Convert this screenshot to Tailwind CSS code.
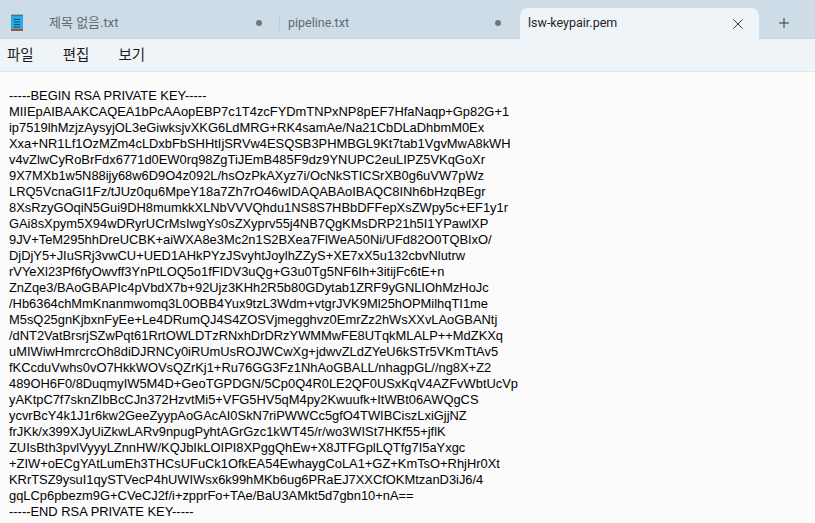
<!DOCTYPE html>
<html lang="ko">
<head>
    <meta charset="utf-8">
    <title>lsw-keypair.pem - Notepad</title>
    <script src="https://cdn.jsdelivr.net/npm/@tailwindcss/browser@4"></script>
</head>
<body class="h-[523px] w-[815px] overflow-hidden bg-[#fbfbfb] font-['Roboto','Noto_Sans_CJK_KR',sans-serif]">

<!-- tab strip -->
<div class="flex h-[39px] items-end border-b border-[#c6d5df] bg-[#cddce6] text-[13px]">
    <div class="flex h-[30px] w-[279px] items-center pl-[11px] pr-[17px] text-[#5f6a72]">
        <svg class="mb-[1px] h-[17px] w-[12px] shrink-0" viewBox="0 0 12 17">
            <rect x="0" y="1" width="12" height="15" rx="1" fill="#29a9e0"/>
            <rect x="0" y="15" width="12" height="2" fill="#a8562a"/>
            <path d="M1 0.5v1.5M3 0.5v1.5M5 0.5v1.5M7 0.5v1.5M9 0.5v1.5M11 0.5v1.5" stroke="#2c4a66" stroke-width="1"/>
            <path d="M3 5.5h6M3 8h6M3 10.500h6M3 13h6" stroke="#0f4f78" stroke-width="1"/>
        </svg>
        <span class="ml-[26px]">제목 없음.txt</span>
        <span class="ml-auto h-[6px] w-[6px] rounded-full bg-[#6f777d]"></span>
    </div>
    <!-- divider between inactive tabs -->
    <div class="mb-[7px] h-[16px] w-px bg-[#bfced8]"></div>
    <div class="flex h-[30px] w-[240px] items-center pl-[8px] pr-[19px] text-[12.5px] text-[#5f6a72]">
        <span>pipeline.txt</span>
        <span class="ml-auto h-[6px] w-[6px] rounded-full bg-[#6f777d]"></span>
    </div>
    <div class="-mb-[1px] flex h-[31px] w-[239px] items-center rounded-t-lg bg-[#eff4f8] pl-[8px] pr-[15px] text-[12.5px] text-[#1f2327]">
        <span>lsw-keypair.pem</span>
        <svg class="ml-auto h-[12px] w-[12px]" viewBox="0 0 12 12" fill="none" stroke="#33383c" stroke-width="1">
            <path d="M1.500 1.500l9 9M10.500 1.500l-9 9"/>
        </svg>
    </div>
    <div class="flex h-[30px] flex-1 items-center pl-[19px]">
        <svg class="h-[12px] w-[12px]" viewBox="0 0 12 12" fill="none" stroke="#33383c" stroke-width="1">
            <path d="M6 1v10M1 6h10"/>
        </svg>
    </div>
</div>

<!-- menu bar -->
<div class="flex h-[33px] items-center gap-[29px] border-b border-[#e3e7ea] bg-[#eff4f8] pt-[2px] pl-[7px] text-[14.5px] text-[#1c1c1c]">
    <span>파일</span>
    <span>편집</span>
    <span>보기</span>
</div>

<!-- editor -->
<pre class="pl-[9px] pt-[16px] font-['Liberation_Sans',sans-serif] text-[12.9px] leading-[16px] text-black">-----BEGIN RSA PRIVATE KEY-----
MIIEpAIBAAKCAQEA1bPcAAopEBP7c1T4zcFYDmTNPxNP8pEF7HfaNaqp+Gp82G+1
ip7519lhMzjzAysyjOL3eGiwksjvXKG6LdMRG+RK4samAe/Na21CbDLaDhbmM0Ex
Xxa+NR1Lf1OzMZm4cLDxbFbSHHtIjSRVw4ESQSB3PHMBGL9Kt7tab1VgvMwA8kWH
v4vZlwCyRoBrFdx6771d0EW0rq98ZgTiJEmB485F9dz9YNUPC2euLIPZ5VKqGoXr
9X7MXb1w5N88ijy68w6D9O4z092L/hsOzPkAXyz7i/OcNkSTICSrXB0g6uVW7pWz
LRQ5VcnaGI1Fz/tJUz0qu6MpeY18a7Zh7rO46wIDAQABAoIBAQC8INh6bHzqBEgr
8XsRzyGOqiN5Gui9DH8mumkkXLNbVVVQhdu1NS8S7HBbDFFepXsZWpy5c+EF1y1r
GAi8sXpym5X94wDRyrUCrMsIwgYs0sZXyprv55j4NB7QgKMsDRP21h5I1YPawlXP
9JV+TeM295hhDreUCBK+aiWXA8e3Mc2n1S2BXea7FlWeA50Ni/UFd82O0TQBIxO/
DjDjY5+JIuSRj3vwCU+UED1AHkPYzJSvyhtJoylhZZyS+XE7xX5u132cbvNlutrw
rVYeXl23Pf6fyOwvff3YnPtLOQ5o1fFIDV3uQg+G3u0Tg5NF6Ih+3itijFc6tE+n
ZnZqe3/BAoGBAPIc4pVbdX7b+92Ujz3KHh2R5b80GDytab1ZRF9yGNLIOhMzHoJc
/Hb6364chMmKnanmwomq3L0OBB4Yux9tzL3Wdm+vtgrJVK9Ml25hOPMilhqTI1me
M5sQ25gnKjbxnFyEe+Le4DRumQJ4S4ZOSVjmegghvz0EmrZz2hWsXXvLAoGBANtj
/dNT2VatBrsrjSZwPqt61RrtOWLDTzRNxhDrDRzYWMMwFE8UTqkMLALP++MdZKXq
uMIWiwHmrcrcOh8diDJRNCy0iRUmUsROJWCwXg+jdwvZLdZYeU6kSTr5VKmTtAv5
fKCcduVwhs0vO7HkkWOVsQZrKj1+Ru76GG3Fz1NhAoGBALL/nhagpGL//ng8X+Z2
489OH6F0/8DuqmyIW5M4D+GeoTGPDGN/5Cp0Q4R0LE2QF0USxKqV4AZFvWbtUcVp
yAKtpC7f7sknZIbBcCJn372HzvtMi5+VFG5HV5qM4py2Kwuufk+ItWBt06AWQgCS
ycvrBcY4k1J1r6kw2GeeZyypAoGAcAI0SkN7riPWWCc5gfO4TWIBCiszLxiGjjNZ
frJKk/x399XJyUiZkwLARv9npugPyhtAGrGzc1kWT45/r/wo3WISt7HKf55+jflK
ZUIsBth3pvlVyyyLZnnHW/KQJbIkLOIPI8XPggQhEw+X8JTFGplLQTfg7I5aYxgc
+ZIW+oECgYAtLumEh3THCsUFuCk1OfkEA54EwhaygCoLA1+GZ+KmTsO+RhjHr0Xt
KRrTSZ9ysuI1qySTVecP4hUWIWsx6k99hMKb6ug6PRaEJ7XXCfOKMtzanD3iJ6/4
gqLCp6pbezm9G+CVeCJ2f/i+zpprFo+TAe/BaU3AMkt5d7gbn10+nA==
-----END RSA PRIVATE KEY-----</pre>

</body>
</html>
